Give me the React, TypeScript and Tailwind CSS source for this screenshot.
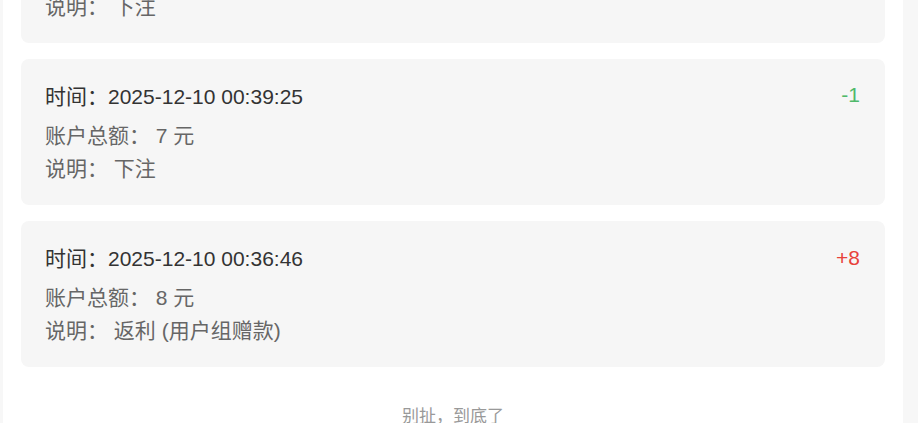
import React from "react";

type Rec = { time: string; balance: string; desc: string; amount: string; positive: boolean };

const records: Rec[] = [
  { time: "2025-12-10 00:40:12", balance: "6", desc: "下注", amount: "-1", positive: false },
  { time: "2025-12-10 00:39:25", balance: "7", desc: "下注", amount: "-1", positive: false },
  { time: "2025-12-10 00:36:46", balance: "8", desc: "返利 (用户组赠款)", amount: "+8", positive: true },
];

function Card({ r }: { r: Rec }) {
  return (
    <div className="rounded-[8px] bg-[#f6f6f6] pl-6 pr-[25px] pt-[23px] pb-[20px]">
      <div className="flex items-start justify-between">
        <div className="text-[21px] leading-[30px] text-[#333333]">时间：{r.time}</div>
        <div
          className={
            r.positive
              ? "text-[21px] leading-[28px] text-[#e8423a]"
              : "text-[21px] leading-[26px] text-[#4fb96b]"
          }
        >
          {r.amount}
        </div>
      </div>
      <div className="mt-[7px] text-[21px] leading-[33px] text-[#666666]">
        账户总额：&nbsp;{r.balance} 元
      </div>
      <div className="text-[21px] leading-[33px] text-[#666666]">说明：&nbsp;{r.desc}</div>
    </div>
  );
}

export default function App() {
  return (
    <div
      className="flex h-[423px] overflow-hidden bg-[#f7f7f7]"
      style={{ fontFamily: '"Liberation Sans", Arial, "Noto Sans CJK SC", sans-serif' }}
    >
      <div className="ml-[3px] flex h-[423px] w-[900px] flex-col bg-white px-[18px]">
        <div className="-mt-[103px] flex flex-col gap-4">
          {records.map((r, i) => (
            <Card key={i} r={r} />
          ))}
        </div>
        <div className="pt-[38px] text-center text-[17px] leading-[24px] text-[#999999]">别扯，到底了</div>
      </div>
    </div>
  );
}
